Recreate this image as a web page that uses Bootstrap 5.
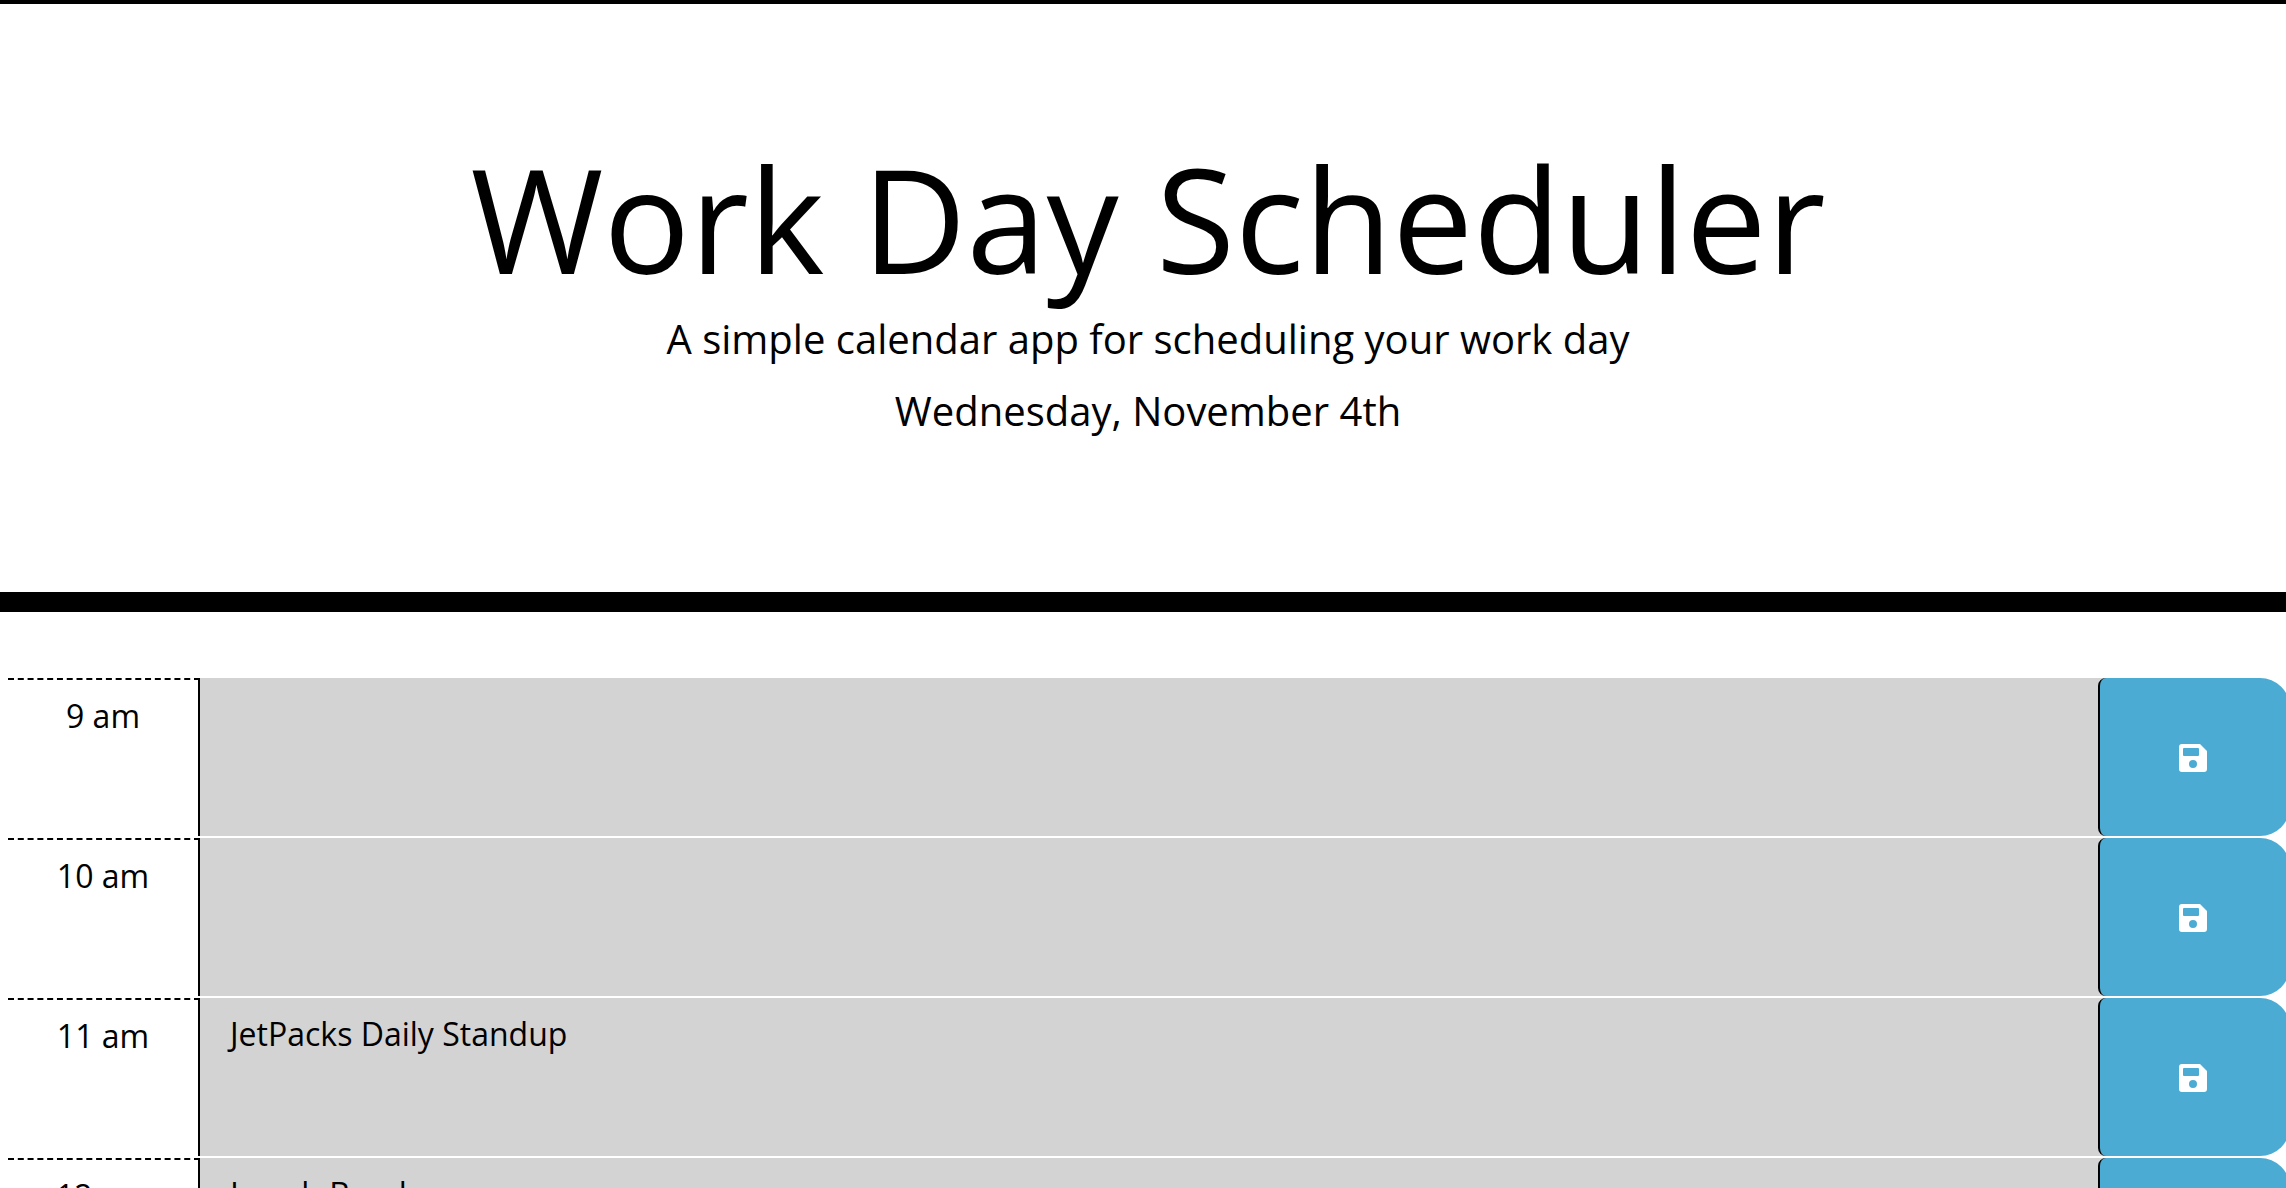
<!DOCTYPE html>
<html lang="en">
<head>
<meta charset="utf-8">
<meta name="viewport" content="width=device-width, initial-scale=1">
<title>Work Day Scheduler</title>
<link href="https://cdn.jsdelivr.net/npm/bootstrap@5.3.0/dist/css/bootstrap.min.css" rel="stylesheet">
<style>
body { font-family: "Open Sans", sans-serif; font-size: 32px; line-height: 48px; color: #000; background: #fff; }
.page-head { border-top: 4px solid #000; border-bottom: 20px solid #000; padding: 128px 64px 128px 74px; margin-bottom: 66px; }
.page-title { font-size: 144px; line-height: 172px; font-weight: 400; }
.page-sub { font-size: 40px; line-height: 70px; margin-bottom: 2px; }
.page-date { font-size: 40px; line-height: 70px; margin-bottom: 18px; }
.planner { padding-left: 8px; overflow: hidden; }
.slot { height: 158px; margin: 0 -4px 2px 0; }
.slot-hour { width: 192px; padding-top: 12px; border-top: 2px dashed #000; border-right: 2px solid #000; }
.slot-note { resize: none; overflow: hidden; background: #d3d3d3; color: #000; padding: 12px 30px; line-height: 48px; outline-color: #000; min-width: 0; }
.slot-save { width: 192px; padding: 2px 4px 0 0; background: #4cabd3; border: 0; border-left: 2px solid #000; border-radius: 8px 30px 30px 8px; }
.slot-save:hover { background: #3b9ac2; }
.slot-end { background: linear-gradient(90deg, #d3d3d3 8px, transparent 8px); }
</style>
<script src="https://cdn.jsdelivr.net/npm/bootstrap@5.3.0/dist/js/bootstrap.bundle.min.js"></script>
</head>
<body>
<svg class="d-none" aria-hidden="true">
  <symbol id="disk" viewBox="0 0 28 28"><path fill="#fff" fill-rule="evenodd" d="M3 0H21L28 7V25a3 3 0 0 1-3 3H3a3 3 0 0 1-3-3V3a3 3 0 0 1 3-3ZM5 4a1 1 0 0 0-1 1V11a1 1 0 0 0 1 1H19a1 1 0 0 0 1-1V5a1 1 0 0 0-1-1ZM14 16a4 4 0 1 0 0 8a4 4 0 0 0 0-8Z"/></symbol>
</svg>
<header class="page-head text-center">
  <h1 class="page-title mb-0">Work Day Scheduler</h1>
  <p class="page-sub">A simple calendar app for scheduling your work day</p>
  <p class="page-date">Wednesday, November 4th</p>
</header>
<main class="planner">
  <div class="slot d-flex">
    <label class="slot-hour text-center flex-shrink-0" for="note9">9 am</label>
    <textarea class="slot-note flex-grow-1 border-0 rounded-0" id="note9"></textarea>
    <div class="slot-end d-flex flex-shrink-0"><button class="slot-save" type="button" aria-label="Save 9 am"><svg width="28" height="28" class="d-block mx-auto"><use href="#disk"/></svg></button></div>
  </div>
  <div class="slot d-flex">
    <label class="slot-hour text-center flex-shrink-0" for="note10">10 am</label>
    <textarea class="slot-note flex-grow-1 border-0 rounded-0" id="note10"></textarea>
    <div class="slot-end d-flex flex-shrink-0"><button class="slot-save" type="button" aria-label="Save 10 am"><svg width="28" height="28" class="d-block mx-auto"><use href="#disk"/></svg></button></div>
  </div>
  <div class="slot d-flex">
    <label class="slot-hour text-center flex-shrink-0" for="note11">11 am</label>
    <textarea class="slot-note flex-grow-1 border-0 rounded-0" id="note11">JetPacks Daily Standup</textarea>
    <div class="slot-end d-flex flex-shrink-0"><button class="slot-save" type="button" aria-label="Save 11 am"><svg width="28" height="28" class="d-block mx-auto"><use href="#disk"/></svg></button></div>
  </div>
  <div class="slot d-flex">
    <label class="slot-hour text-center flex-shrink-0" for="note12">12 pm</label>
    <textarea class="slot-note flex-grow-1 border-0 rounded-0" id="note12">Lunch Break</textarea>
    <div class="slot-end d-flex flex-shrink-0"><button class="slot-save" type="button" aria-label="Save 12 pm"><svg width="28" height="28" class="d-block mx-auto"><use href="#disk"/></svg></button></div>
  </div>
</main>
</body>
</html>
